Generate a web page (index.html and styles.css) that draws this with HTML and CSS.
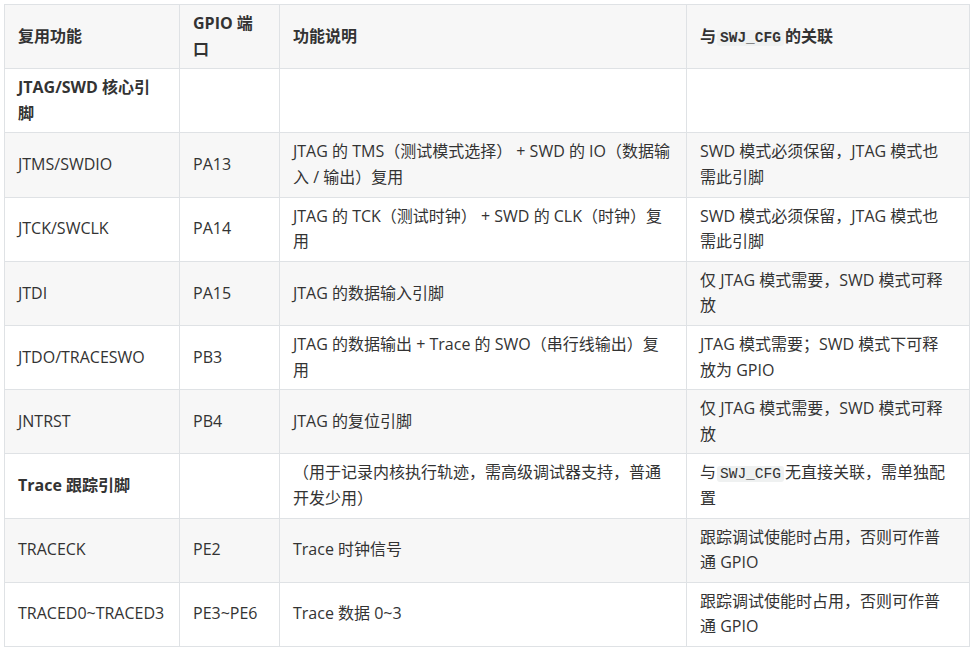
FILE: index.html
```html
<!DOCTYPE html>
<html lang="zh-CN">
<head>
<meta charset="utf-8">
<title>SWJ 复用引脚</title>
<link rel="stylesheet" href="styles.css">
</head>
<body>
<table class="pin-table">
  <colgroup>
    <col class="c-func">
    <col class="c-gpio">
    <col class="c-desc">
    <col class="c-rel">
  </colgroup>
  <thead>
    <tr>
      <th>复用功能</th>
      <th>GPIO 端口</th>
      <th>功能说明</th>
      <th>与<code>SWJ_CFG</code>的关联</th>
    </tr>
  </thead>
  <tbody>
    <tr>
      <td><strong>JTAG/SWD 核心引脚</strong></td>
      <td></td>
      <td></td>
      <td></td>
    </tr>
    <tr>
      <td>JTMS/SWDIO</td>
      <td>PA13</td>
      <td>JTAG 的 TMS（测试模式选择） + SWD 的 IO（数据输入 / 输出）复用</td>
      <td>SWD 模式必须保留，JTAG 模式也需此引脚</td>
    </tr>
    <tr>
      <td>JTCK/SWCLK</td>
      <td>PA14</td>
      <td>JTAG 的 TCK（测试时钟） + SWD 的 CLK（时钟）复用</td>
      <td>SWD 模式必须保留，JTAG 模式也需此引脚</td>
    </tr>
    <tr>
      <td>JTDI</td>
      <td>PA15</td>
      <td>JTAG 的数据输入引脚</td>
      <td>仅 JTAG 模式需要，SWD 模式可释放</td>
    </tr>
    <tr>
      <td>JTDO/TRACESWO</td>
      <td>PB3</td>
      <td>JTAG 的数据输出 + Trace 的 SWO（串行线输出）复用</td>
      <td>JTAG 模式需要；SWD 模式下可释放为 GPIO</td>
    </tr>
    <tr>
      <td>JNTRST</td>
      <td>PB4</td>
      <td>JTAG 的复位引脚</td>
      <td>仅 JTAG 模式需要，SWD 模式可释放</td>
    </tr>
    <tr>
      <td><strong>Trace 跟踪引脚</strong></td>
      <td></td>
      <td>（用于记录内核执行轨迹，需高级调试器支持，普通开发少用）</td>
      <td>与<code>SWJ_CFG</code>无直接关联，需单独配置</td>
    </tr>
    <tr>
      <td>TRACECK</td>
      <td>PE2</td>
      <td>Trace 时钟信号</td>
      <td>跟踪调试使能时占用，否则可作普通 GPIO</td>
    </tr>
    <tr>
      <td>TRACED0~TRACED3</td>
      <td>PE3~PE6</td>
      <td>Trace 数据 0~3</td>
      <td>跟踪调试使能时占用，否则可作普通 GPIO</td>
    </tr>
  </tbody>
</table>
</body>
</html>
```
FILE: styles.css
```css
html, body {
  background: #ffffff;
}
body {
  margin: 4px;
  font-family: "Open Sans", "Noto Sans CJK SC", sans-serif;
  font-size: 16px;
  line-height: 1.6;
  color: #333333;
}
.pin-table {
  border-collapse: collapse;
  border-spacing: 0;
  table-layout: fixed;
  width: 965px;
}
.c-func { width: 175px; }
.c-gpio { width: 100px; }
.c-desc { width: 407px; }
.c-rel { width: 283px; }
.pin-table th,
.pin-table td {
  border: 1px solid #dfe2e5;
  padding: 6px 13px;
  text-align: left;
  vertical-align: middle;
}
.pin-table th:last-child,
.pin-table td:last-child {
  padding-right: 20px;
}
.pin-table th {
  font-weight: 700;
}
.pin-table thead tr {
  background: #f7f7f7;
}
.pin-table tbody tr:nth-child(2n) {
  background: #f7f7f7;
}
.pin-table strong {
  font-weight: 700;
}
.pin-table code {
  font-family: "Liberation Mono", "DejaVu Sans Mono", monospace;
  font-size: 14.5px;
  line-height: 1;
  background: #eff1f1;
  border-radius: 3px;
  padding: 0 3px;
  margin: 0 1px;
}
```
